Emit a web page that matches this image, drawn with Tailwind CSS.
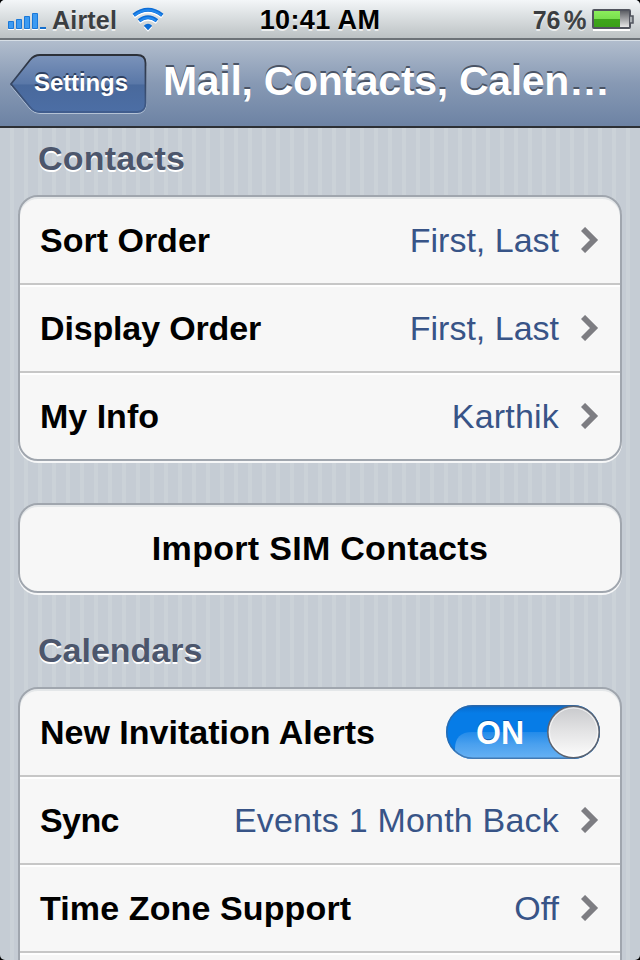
<!DOCTYPE html>
<html lang="en">
<head>
<meta charset="utf-8">
<title>Settings</title>
<script src="https://cdn.jsdelivr.net/npm/@tailwindcss/browser@4"></script>
</head>
<body class="bg-black">
<div class="relative flex h-[960px] w-[640px] flex-col overflow-hidden rounded-[5px] bg-[repeating-linear-gradient(90deg,#c5ccd4_0px,#c5ccd4_10px,#cbd2d8_10px,#cbd2d8_14px)] font-['Liberation_Sans',Arial,sans-serif] text-[34px] whitespace-nowrap">
  <header class="flex h-10 shrink-0 items-center border-b-2 border-[#6d7378] bg-linear-to-b from-[#f3f6f8] to-[#bcc2c4] text-[25px] leading-[38px] font-bold text-[#3b3e41] [text-shadow:0_2px_0_#ffffffb0]">
    <div class="flex w-[200px] items-center pl-2">
      <svg class="mt-[3px] h-[18px] w-[39px] shrink-0" viewBox="0 0 39 18"><path d="M0 17.500H6M8 17.500H14M16 17.500H22M24 17.500H30M32 17.500H38" stroke="#fff"/><g fill="#3d9bf2" stroke="#1a78d8"><path d="M.5 9.500h5v7h-5zM8.500 7.500h5v9h-5zM16.500 4.500h5v12h-5zM24.500 1.500h5v15h-5z"/></g><path d="M32 15h6v2h-6z" fill="#1770cd"/></svg>
      <span class="ml-[5px] w-[65px] pt-0.5 tracking-[0.2px]">Airtel</span>
      <svg class="ml-[15px] h-[26px] w-8 shrink-0" viewBox="0 0 32 26"><defs><g id="w" fill="none" stroke-width="3.900"><path d="M1.700 9.200Q16-1.500 30.300 9.200M7 14.800Q16 7.800 25 14.800"/><path d="M11.800 19.800q4.200-4 8.400 0l-4.200 4.400z" stroke="none"/></g></defs><g fill="#fff" stroke="#fff" transform="translate(0 1.500)"><path d="M1.700 9.200Q16-1.500 30.300 9.200M7 14.800Q16 7.800 25 14.800" fill="none" stroke-width="3.900"/><path d="M11.800 19.800q4.200-4 8.400 0l-4.200 4.400z" stroke="none"/></g><path d="M1.700 9.200Q16-1.500 30.300 9.200M7 14.800Q16 7.800 25 14.800" fill="none" stroke="#0d6dd6" stroke-width="3.900"/><path d="M2.500 9.400Q16-.8 29.500 9.400M7.800 15Q16 8.600 24.200 15" fill="none" stroke="#2288ee" stroke-width="2"/><path d="M11.800 19.800q4.200-4 8.400 0l-4.200 4.400z" fill="#0b6cd6"/></svg>
    </div>
    <div class="w-[240px] pt-0.5 text-center text-[27px] text-black"><span class="tracking-[0.4px]">10:41 AM</span></div>
    <div class="flex w-[200px] items-center justify-end pr-[5px]">
      <span class="mr-[6px] pt-0.5 tracking-[-0.3px]">76<span class="ml-1 font-normal [-webkit-text-stroke:0.8px_#3b3e41]">%</span></span>
      <svg class="mt-0.5 h-[22px] w-[43px] shrink-0" viewBox="0 0 43 22"><defs><linearGradient id="b" x2="0" y2="1"><stop stop-color="#55585e"/><stop offset="1" stop-color="#eee"/></linearGradient><linearGradient id="g" x2="0" y2="1"><stop stop-color="#8bee5c"/><stop offset=".5" stop-color="#79e04d"/><stop offset=".5" stop-color="#3ea51b"/><stop offset="1" stop-color="#3a9f18"/></linearGradient></defs><path d="M1 21h37" stroke="#fff" stroke-width="2"/><rect x="1" y="1" width="37" height="18" rx="1" fill="url(#b)" stroke="#51545e" stroke-width="2"/><path d="M2 2h26v16h-26z" fill="url(#g)"/><path d="M38 7h3v7h-3" fill="#abb0b4" stroke="#51545e" stroke-width="1.500"/></svg>
    </div>
  </header>
  <nav class="flex h-[88px] shrink-0 border-t border-b-2 border-t-[#d7dfe6] border-b-[#2d3035] bg-linear-to-b from-[#b1bdcd] via-[#8799b4] via-50% to-[#6d83a4] font-bold text-white">
    <a class="relative mt-[13px] ml-2.5 flex h-[60px] w-[137px] shrink-0">
      <svg class="absolute inset-0" width="137" height="60" viewBox="0 0 137 60"><defs><linearGradient id="n" x2="0" y2="1"><stop stop-color="#7b93ba"/><stop offset=".5" stop-color="#5a78a8"/><stop offset=".53" stop-color="#49699c"/><stop offset="1" stop-color="#4c6ea5"/></linearGradient><linearGradient id="o" x2="0" y2="1"><stop stop-color="#2c3038"/><stop offset="1" stop-color="#405d8e"/></linearGradient></defs><path d="M1 32L20 55Q24 59.500 30 59.500H127Q136 59.500 136 50V12" fill="none" stroke="#b4c2d5"/><path d="M1 30L20 6Q24 1 30 1H127Q135.500 1 135.500 9V49Q135.500 58 127 58H30Q24 58 20 53Z" fill="url(#n)" stroke="url(#o)" stroke-width="1.800"/></svg>
      <span class="relative ml-[24px] text-[24px] leading-[58px] tracking-[-0.1px] [text-shadow:0_-2px_0_#2f4161]">Settings</span>
    </a>
    <h1 class="ml-4 text-[41px] leading-[81px] tracking-[-0.3px] [text-shadow:0_-2px_0_#4a5465]">Mail, Contacts, Calen…</h1>
  </nav>
  <main class="flex flex-col px-[18px]">
    <h2 class="h-[67px] pl-5 leading-[60px] font-bold tracking-[0.2px] text-[#4c566c] [text-shadow:0_2px_0_#fff]">Contacts</h2>
    <section class="h-[266px] overflow-hidden rounded-[20px] border-2 border-[#a0a6ae] bg-[#f7f7f7] shadow-[0_2px_0_#f6f7f8,inset_0_2px_0_#e4e7e9]">
      <div class="flex h-[88px] items-center border-b-2 border-[#c7c7c7] px-5"><b>Sort Order</b><span class="ml-auto text-[#385487]">First, Last</span><svg class="ml-[22px] h-[26px] w-[19px]" viewBox="0 0 19 26"><path d="M2 2L13 13L2 24" fill="none" stroke="#7d7d82" stroke-width="5.800"/></svg></div>
      <div class="flex h-[88px] items-center border-b-2 border-[#c7c7c7] px-5 shadow-[inset_0_2px_0_#fff]"><b class="tracking-[-0.15px]">Display Order</b><span class="ml-auto text-[#385487]">First, Last</span><svg class="ml-[22px] h-[26px] w-[19px]" viewBox="0 0 19 26"><path d="M2 2L13 13L2 24" fill="none" stroke="#7d7d82" stroke-width="5.800"/></svg></div>
      <div class="flex h-[86px] items-center px-5 shadow-[inset_0_2px_0_#fff]"><b>My Info</b><span class="ml-auto tracking-[0.2px] text-[#385487]">Karthik</span><svg class="ml-[22px] h-[26px] w-[19px]" viewBox="0 0 19 26"><path d="M2 2L13 13L2 24" fill="none" stroke="#7d7d82" stroke-width="5.800"/></svg></div>
    </section>
    <section class="mt-[42px] flex h-[90px] items-center justify-center rounded-[20px] border-2 border-[#a0a6ae] bg-[#f7f7f7] shadow-[0_2px_0_#f6f7f8,inset_0_2px_0_#e4e7e9]"><b class="tracking-[0.3px]">Import SIM Contacts</b></section>
    <h2 class="h-[94px] pt-[26px] pl-5 leading-[62px] font-bold text-[#4c566c] [text-shadow:0_2px_0_#fff]">Calendars</h2>
    <section class="h-[354px] shrink-0 overflow-hidden rounded-[20px] border-2 border-[#a0a6ae] bg-[#f7f7f7] shadow-[inset_0_2px_0_#e4e7e9]">
      <div class="flex h-[88px] items-center border-b-2 border-[#c7c7c7] px-[20px]"><b>New Invitation Alerts</b>
        <svg class="ml-auto h-[54px] w-[154px]" viewBox="0 0 154 54"><defs><linearGradient id="t" x2="0" y2="1"><stop stop-color="#0868c8"/><stop offset=".15" stop-color="#067ce7"/><stop offset="1" stop-color="#067ce7"/></linearGradient><linearGradient id="s" x2="0" y2="1"><stop stop-color="#238bea"/><stop offset=".45" stop-color="#4aa0ee"/><stop offset="1" stop-color="#68b2f4"/></linearGradient><linearGradient id="k" x2="0" y2="1"><stop stop-color="#c8c9cc"/><stop offset=".5" stop-color="#e4e4e5"/><stop offset="1" stop-color="#fcfcfc"/></linearGradient><clipPath id="c"><rect width="154" height="54" rx="27"/></clipPath></defs><g clip-path="url(#c)"><path d="M0 0h154v54H0z" fill="url(#t)"/><path d="M9 54V44Q9 27 26 27H128V54z" fill="url(#s)"/></g><rect x=".8" y=".8" width="152.400" height="52.400" rx="26.200" fill="none" stroke="#35679f" stroke-opacity=".75" stroke-width="1.500"/><circle cx="127.500" cy="27" r="25.700" fill="url(#k)" stroke="#5c6370" stroke-width="1.500"/><circle cx="127.500" cy="27" r="24" fill="none" stroke="#fff" stroke-opacity=".7"/><text x="30" y="37.500" font-weight="700" font-size="33" textLength="48" lengthAdjust="spacingAndGlyphs" fill="#0758b0">ON</text><text x="30" y="39" font-weight="700" font-size="33" textLength="48" lengthAdjust="spacingAndGlyphs" fill="#fff">ON</text></svg>
      </div>
      <div class="flex h-[88px] items-center border-b-2 border-[#c7c7c7] px-5 shadow-[inset_0_2px_0_#fff]"><b class="tracking-[-0.6px]">Sync</b><span class="ml-auto tracking-[0.2px] text-[#385487]">Events 1 Month Back</span><svg class="ml-[22px] h-[26px] w-[19px]" viewBox="0 0 19 26"><path d="M2 2L13 13L2 24" fill="none" stroke="#7d7d82" stroke-width="5.800"/></svg></div>
      <div class="flex h-[88px] items-center border-b-2 border-[#c7c7c7] px-5 shadow-[inset_0_2px_0_#fff]"><b class="tracking-[0.12px]">Time Zone Support</b><span class="ml-auto text-[#385487]">Off</span><svg class="ml-[22px] h-[26px] w-[19px]" viewBox="0 0 19 26"><path d="M2 2L13 13L2 24" fill="none" stroke="#7d7d82" stroke-width="5.800"/></svg></div>
      <div class="h-[86px] shadow-[inset_0_2px_0_#fff]"></div>
    </section>
  </main>
</div>
</body>
</html>
